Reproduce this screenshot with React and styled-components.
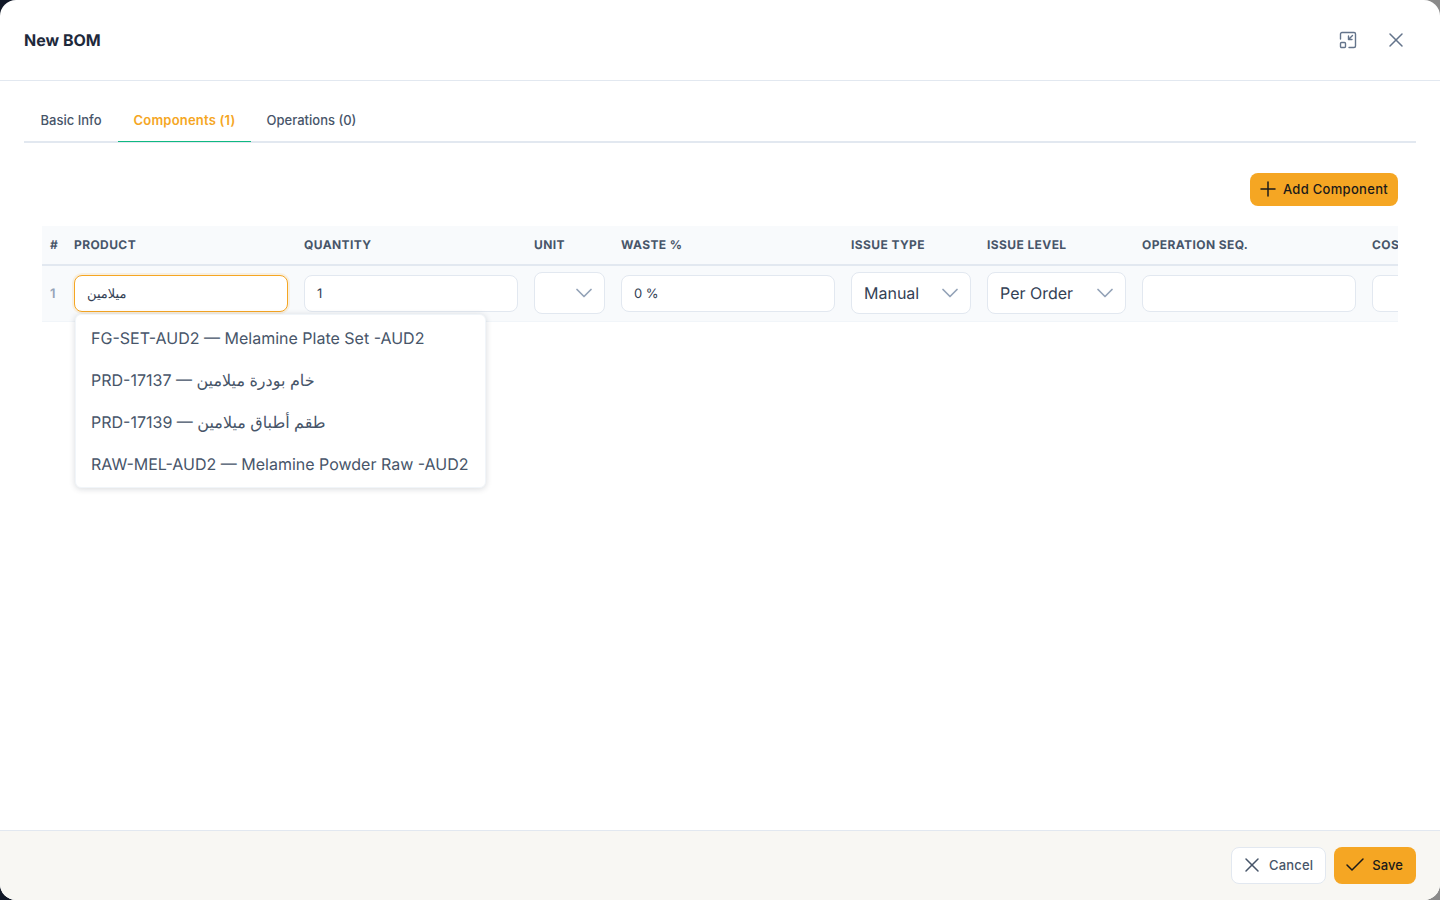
import React from 'react'
import styled, { createGlobalStyle } from 'styled-components'
import { ChevronDown, Plus, X, Check } from 'lucide-react'

const GlobalStyle = createGlobalStyle`
  html, body {
    margin: 0;
    height: 100%;
    background: linear-gradient(90deg, #111827 0%, #111827 50%, #8a8a8a 50%, #8a8a8a 100%);
    overflow: hidden;
  }
  * { box-sizing: border-box; }
`

const Modal = styled.div`
  width: 1440px;
  height: 900px;
  background: #fff;
  border-radius: 16px;
  overflow: hidden;
  display: flex;
  flex-direction: column;
  font-family: Inter, "DejaVu Sans", sans-serif;
  text-rendering: geometricPrecision;
`

const Header = styled.header`
  height: 81px;
  flex: none;
  display: flex;
  align-items: center;
  justify-content: space-between;
  padding: 0 24px;
  border-bottom: 1px solid #e2e8f0;
`

const Title = styled.h2`
  margin: 0;
  font-size: 16px;
  font-weight: 700;
  color: #1e293b;
`

const HeaderActions = styled.div`
  display: flex;
  gap: 8px;
`

const IconButton = styled.button`
  width: 40px;
  height: 40px;
  padding: 0;
  border: 0;
  background: none;
  color: #64748b;
  display: flex;
  align-items: center;
  justify-content: center;
`

const Body = styled.main`
  flex: 1;
  padding: 19px 24px 0;
  min-height: 0;
`

const Tabs = styled.nav`
  display: flex;
  height: 43px;
  border-bottom: 2px solid #e2e8f0;
`

const Tab = styled.button`
  width: ${p => p.$width}px;
  height: 42px;
  padding: 0 0 1px;
  border: 0;
  border-bottom: 1px solid ${p => (p.$active ? '#10b981' : 'transparent')};
  background: none;
  font-family: inherit;
  font-size: 13px;
  font-weight: ${p => (p.$active ? 600 : 500)};
  letter-spacing: ${p => (p.$active ? '0.2px' : '0')};
  color: ${p => (p.$active ? '#f5a623' : '#475569')};
`

const Panel = styled.section`
  padding: 30px 18px 0;
`

const Toolbar = styled.div`
  display: flex;
  justify-content: flex-end;
  margin-bottom: 20px;
`

const PrimaryButton = styled.button`
  height: ${p => (p.$tall ? '37px' : '33px')};
  padding: ${p => (p.$tall ? '0 13px 1px 9px' : '0 10px 1px 6px')};
  display: flex;
  align-items: center;
  gap: ${p => (p.$tall ? '5px' : '3px')};
  border: 0;
  border-radius: 8px;
  background: #f5a623;
  color: #1a1a1a;
  font-family: inherit;
  font-size: 13px;
  font-weight: 500;
  letter-spacing: ${p => (p.$tall ? '0.1px' : '0.3px')};
`

const TableWrap = styled.div`
  position: relative;
  overflow: hidden;
  height: 600px;
`

const Grid = styled.div`
  display: grid;
  grid-template-columns: 32px 230px 230px 87px 230px 136px 155px 230px 230px;
  width: 1340px;
`

const HeadCell = styled.div`
  height: 40px;
  padding-left: ${p => (p.$first ? '8px' : '0')};
  padding-bottom: 1px;
  display: flex;
  align-items: center;
  background: #f8fafc;
  border-bottom: 2px solid #e2e8f0;
  font-size: 12px;
  font-weight: 700;
  color: #475569;
  letter-spacing: 0.4px;
  white-space: nowrap;
`

const Cell = styled.div`
  height: 56px;
  padding-left: ${p => (p.$first ? '8px' : '0')};
  display: flex;
  align-items: center;
  background: #f8fafc;
  border-bottom: 1px solid #f1f5f9;
`

const RowNumber = styled.span`
  font-size: 13px;
  font-weight: 600;
  color: #94a3b8;
`

const Input = styled.div`
  width: 214px;
  height: 37px;
  padding: 0 12px;
  display: flex;
  align-items: center;
  flex: none;
  background: #fff;
  border: 1px solid ${p => (p.$focus ? '#f5a623' : '#e2e8f0')};
  border-radius: 8px;
  box-shadow: ${p => (p.$focus ? '0 0 0 2px rgba(245, 166, 35, 0.12)' : 'none')};
  font-size: 13px;
  color: #334155;
`

const Select = styled.div`
  width: ${p => p.$width}px;
  height: 42px;
  margin-bottom: 1px;
  padding: 0 6px 1px 12px;
  display: flex;
  align-items: center;
  justify-content: space-between;
  flex: none;
  background: #fff;
  border: 1px solid #e2e8f0;
  border-radius: 8px;
  font-size: 16px;
  color: #334155;
  svg { color: #94a3b8; flex: none; }
`

const Dropdown = styled.ul`
  position: absolute;
  left: 33px;
  top: 88px;
  margin: 0;
  padding: 2px 0;
  list-style: none;
  width: 411px;
  background: #fff;
  border: 1px solid #f1f5f9;
  border-radius: 6px;
  box-shadow: 0 1px 6px rgba(15, 23, 42, 0.16);
`

const Option = styled.li`
  height: 42px;
  padding: 0 15px;
  display: flex;
  align-items: center;
  font-size: 16px;
  color: #475569;
  white-space: nowrap;
`

const Footer = styled.footer`
  height: 70px;
  flex: none;
  display: flex;
  align-items: center;
  justify-content: flex-end;
  gap: 8px;
  padding: 0 24px;
  background: #f8f7f3;
  border-top: 1px solid #e2e8f0;
`

const CancelButton = styled.button`
  height: 37px;
  padding: 0 12px 1px 8px;
  display: flex;
  align-items: center;
  gap: 5px;
  background: #fff;
  border: 1px solid #e2e8f0;
  border-radius: 8px;
  color: #475569;
  font-family: inherit;
  font-size: 13px;
  font-weight: 500;
  letter-spacing: 0.15px;
`

// lucide has no exact match for this one, a frame with a small square in the corner
const MinimizeIcon = () => (
  <svg width="18" height="18" viewBox="0 0 18 18" fill="none" stroke="currentColor" strokeWidth="1.4" strokeLinecap="round" strokeLinejoin="round">
    <path d="M1.5 8V3a1.5 1.5 0 0 1 1.5-1.5h12A1.5 1.5 0 0 1 16.5 3v12a1.5 1.5 0 0 1-1.5 1.5H10" />
    <rect x="1.5" y="11.5" width="5" height="5" rx="1" />
    <path d="M13.5 4.5 9.5 8.5M9.5 5V8.5H13" />
  </svg>
)

const columns = ['PRODUCT', 'QUANTITY', 'UNIT', 'WASTE %', 'ISSUE TYPE', 'ISSUE LEVEL', 'OPERATION SEQ.', 'COST']

const options = [
  'FG-SET-AUD2 — Melamine Plate Set -AUD2',
  'PRD-17137 — خام بودرة ميلامين',
  'PRD-17139 — طقم أطباق ميلامين',
  'RAW-MEL-AUD2 — Melamine Powder Raw -AUD2',
]

export default function App() {
  return (
    <>
      <GlobalStyle />
      <Modal>
        <Header>
          <Title>New BOM</Title>
          <HeaderActions>
            <IconButton><MinimizeIcon /></IconButton>
            <IconButton><X size={24} strokeWidth={1.5} /></IconButton>
          </HeaderActions>
        </Header>
        <Body>
          <Tabs>
            <Tab $width={94}>Basic Info</Tab>
            <Tab $width={133} $active>Components (1)</Tab>
            <Tab $width={121}>Operations (0)</Tab>
          </Tabs>
          <Panel>
            <Toolbar>
              <PrimaryButton><Plus size={24} strokeWidth={1.5} />Add Component</PrimaryButton>
            </Toolbar>
            <TableWrap>
              <Grid>
                <HeadCell $first>#</HeadCell>
                {columns.map(c => <HeadCell key={c}>{c}</HeadCell>)}
                <Cell $first><RowNumber>1</RowNumber></Cell>
                <Cell><Input $focus>ميلامين</Input></Cell>
                <Cell><Input>1</Input></Cell>
                <Cell><Select $width={71}><span /><ChevronDown size={28} strokeWidth={1.5} /></Select></Cell>
                <Cell><Input>0 %</Input></Cell>
                <Cell><Select $width={120}>Manual<ChevronDown size={28} strokeWidth={1.5} /></Select></Cell>
                <Cell><Select $width={139}>Per Order<ChevronDown size={28} strokeWidth={1.5} /></Select></Cell>
                <Cell><Input /></Cell>
                <Cell><Input /></Cell>
              </Grid>
              <Dropdown>
                {options.map(o => <Option key={o}>{o}</Option>)}
              </Dropdown>
            </TableWrap>
          </Panel>
        </Body>
        <Footer>
          <CancelButton><X size={24} strokeWidth={1.5} />Cancel</CancelButton>
          <PrimaryButton $tall><Check size={24} strokeWidth={1.5} />Save</PrimaryButton>
        </Footer>
      </Modal>
    </>
  )
}
